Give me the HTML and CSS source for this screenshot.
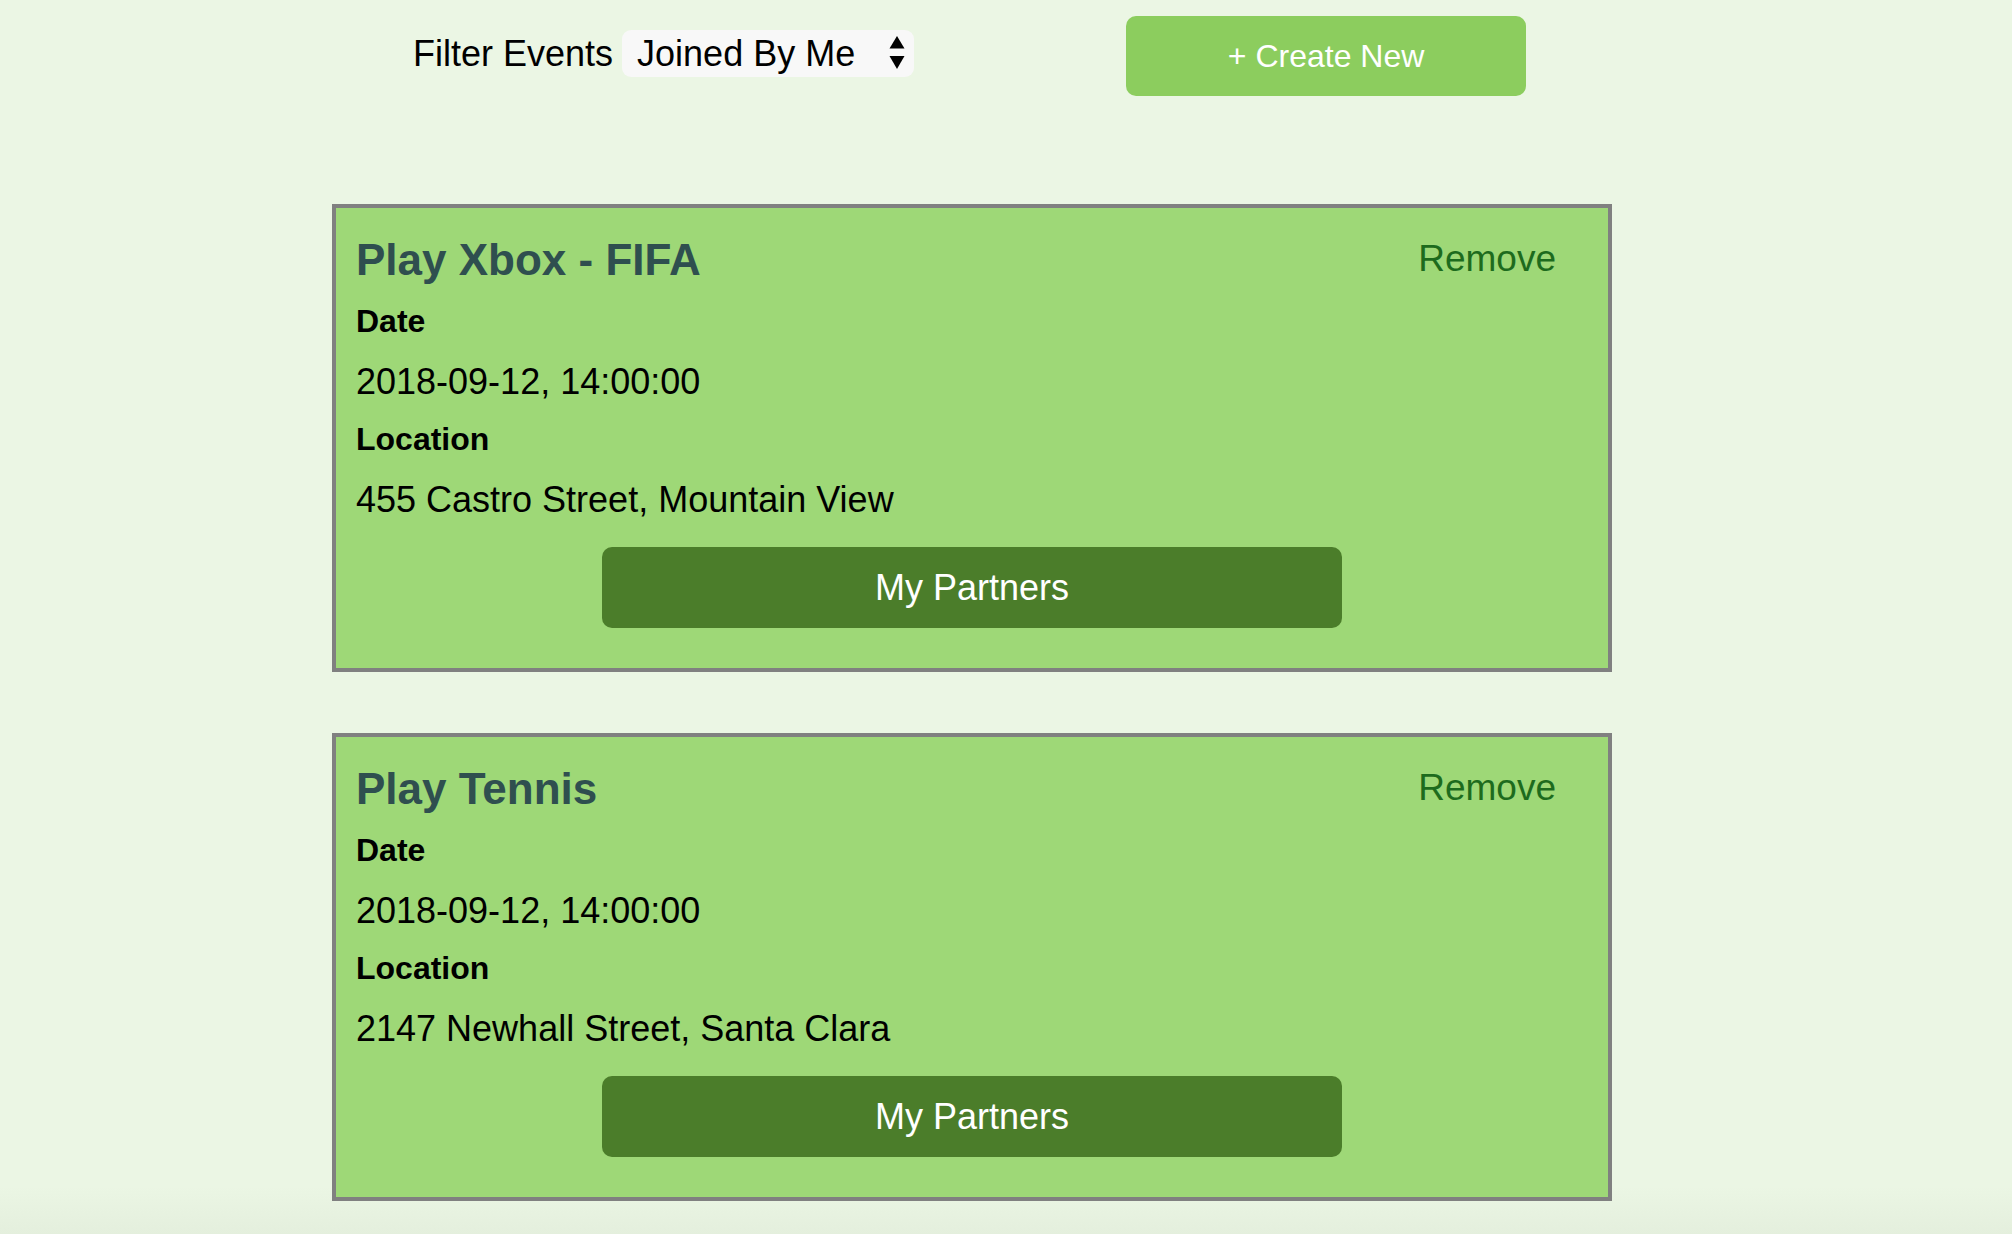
FILE: index.html
```html
<!DOCTYPE html>
<html>
<head>
<meta charset="utf-8">
<title>Events</title>
<link rel="stylesheet" href="styles.css">
</head>
<body>
<div class="page">
  <div class="toolbar">
    <label class="filter-label" for="filter">Filter Events</label>
    <div class="select-wrap">
      <select id="filter" class="filter-select">
        <option>Joined By Me</option>
        <option>Created By Me</option>
        <option>All</option>
      </select>
      <svg class="select-arrows" width="16" height="34" viewBox="0 0 16 34">
        <path d="M8 0 L15.5 12.5 L0.5 12.5 Z" fill="#000"/>
        <path d="M0.5 20 L15.5 20 L8 33 Z" fill="#000"/>
      </svg>
    </div>
    <button class="create-btn">+ Create New</button>
  </div>

  <div class="card">
    <div class="card-head">
      <h2 class="card-title">Play Xbox - FIFA</h2>
      <span class="remove">Remove</span>
    </div>
    <div class="label">Date</div>
    <div class="value">2018-09-12, 14:00:00</div>
    <div class="label">Location</div>
    <div class="value">455 Castro Street, Mountain View</div>
    <button class="partners-btn">My Partners</button>
  </div>

  <div class="card">
    <div class="card-head">
      <h2 class="card-title">Play Tennis</h2>
      <span class="remove">Remove</span>
    </div>
    <div class="label">Date</div>
    <div class="value">2018-09-12, 14:00:00</div>
    <div class="label">Location</div>
    <div class="value">2147 Newhall Street, Santa Clara</div>
    <button class="partners-btn">My Partners</button>
  </div>
</div>
</body>
</html>
```

FILE: styles.css
```css
html {
  min-height: 100%;
  background: linear-gradient(to bottom, #ebf6e4 0%, #ebf6e4 94%, #e0ebd9 100%);
}
body {
  margin: 0;
  min-height: 1234px;
  font-family: "Liberation Sans", Arial, Helvetica, sans-serif;
  color: #000;
}
.page {
  width: 1280px;
  margin-left: 332px;
}
.toolbar {
  display: flex;
  align-items: center;
  height: 80px;
  padding-top: 16px;
  padding-left: 81px;
  margin-bottom: 108px;
}
.filter-label {
  font-size: 36px;
  line-height: 42px;
  margin-top: -5px;
}
.select-wrap {
  position: relative;
  margin-left: 9px;
  margin-top: -5px;
}
.filter-select {
  appearance: none;
  -webkit-appearance: none;
  display: block;
  width: 292px;
  height: 47px;
  border: none;
  border-radius: 9px;
  background: #f8f8f8;
  font-family: "Liberation Sans", Arial, Helvetica, sans-serif;
  font-size: 36px;
  color: #000;
  padding: 0 0 0 15px;
  margin: 0;
  outline: none;
}
.select-arrows {
  position: absolute;
  right: 9px;
  top: 6px;
}
.create-btn {
  margin-left: 212px;
  width: 400px;
  height: 80px;
  border: none;
  border-radius: 10px;
  background: #8ccd5e;
  color: #fff;
  font-family: "Liberation Sans", Arial, Helvetica, sans-serif;
  font-size: 32px;
  padding: 0;
}
.card {
  border: 4px solid #808080;
  background: #9ed877;
  padding: 24px 20px 40px 20px;
  margin-bottom: 61px;
}
.card-head {
  display: flex;
  justify-content: space-between;
  align-items: flex-start;
}
.card-title {
  margin: 0;
  font-size: 44px;
  line-height: 56px;
  font-weight: bold;
  color: #2f4f4f;
}
.remove {
  font-size: 37px;
  line-height: 48px;
  margin-top: 3px;
  margin-right: 32px;
  color: #1d6b1d;
}
.label {
  font-size: 32px;
  line-height: 44px;
  font-weight: bold;
  margin-top: 11px;
}
.label + .value + .label {
  margin-top: 11px;
}
.value {
  font-size: 36px;
  line-height: 48px;
  margin-top: 15px;
}
.value + .label + .value {
  margin-top: 15px;
}
.partners-btn {
  display: block;
  width: 60%;
  height: 81px;
  margin: 23px auto 0;
  border: none;
  border-radius: 10px;
  background: #4b7d2a;
  color: #fff;
  font-family: "Liberation Sans", Arial, Helvetica, sans-serif;
  font-size: 36px;
  padding: 0;
}
```
